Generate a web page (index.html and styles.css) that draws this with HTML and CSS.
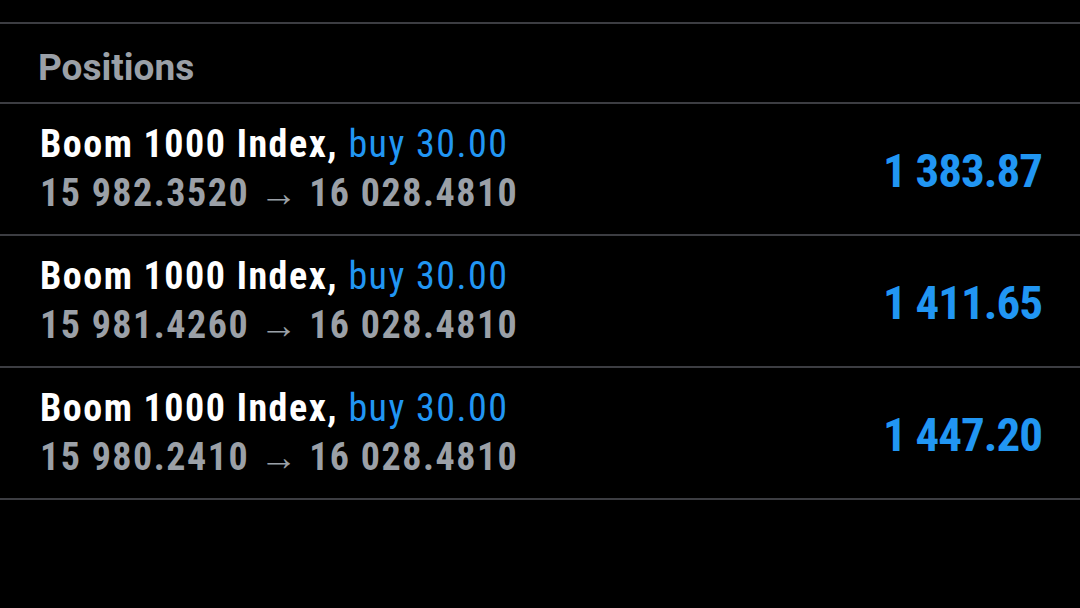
FILE: index.html
```html
<!DOCTYPE html>
<html lang="en">

<head>
    <meta charset="UTF-8">
    <meta name="viewport" content="width=device-width, initial-scale=1.0">
    <title>Positions</title>
    <link rel="stylesheet" href="styles.css">
</head>

<body>
    <div class="top-gap"></div>
    <div class="section-title">Positions</div>
    <div class="positions">
        <div class="position">
            <div class="info">
                <div class="symbol">Boom 1000 Index, <span class="side">buy 30.00</span></div>
                <div class="prices">15 982.3520 → 16 028.4810</div>
            </div>
            <div class="profit">1 383.87</div>
        </div>
        <div class="position">
            <div class="info">
                <div class="symbol">Boom 1000 Index, <span class="side">buy 30.00</span></div>
                <div class="prices">15 981.4260 → 16 028.4810</div>
            </div>
            <div class="profit">1 411.65</div>
        </div>
        <div class="position">
            <div class="info">
                <div class="symbol">Boom 1000 Index, <span class="side">buy 30.00</span></div>
                <div class="prices">15 980.2410 → 16 028.4810</div>
            </div>
            <div class="profit">1 447.20</div>
        </div>
    </div>
</body>

</html>
```

FILE: styles.css
```css
body {
    margin: 0;
    background-color: #000;
    font-family: "Roboto Condensed", Roboto, sans-serif;
    font-stretch: condensed;
    color: #fff;
}

.top-gap {
    height: 22px;
    border-bottom: 2px solid #3c3d42;
}

.section-title {
    height: 80px;
    box-sizing: border-box;
    padding: 21px 38px 0;
    font-family: Roboto, sans-serif;
    font-stretch: normal;
    font-size: 37px;
    line-height: 45px;
    font-weight: 700;
    color: #9ba0a7;
    border-bottom: 2px solid #3c3d42;
}

.position {
    display: flex;
    align-items: center;
    justify-content: space-between;
    height: 132px;
    box-sizing: border-box;
    padding: 0 38px 0 40px;
    border-bottom: 2px solid #3c3d42;
}

.symbol,
.prices {
    font-size: 38px;
    line-height: 49px;
    font-weight: 700;
    letter-spacing: 1.5px;
    white-space: nowrap;
}

.side {
    font-weight: 400;
    color: #2196f3;
}

.prices {
    color: #9ba0a7;
}

.profit {
    padding-top: 3px;
    font-size: 47px;
    font-weight: 700;
    letter-spacing: -1px;
    color: #2196f3;
}
```
